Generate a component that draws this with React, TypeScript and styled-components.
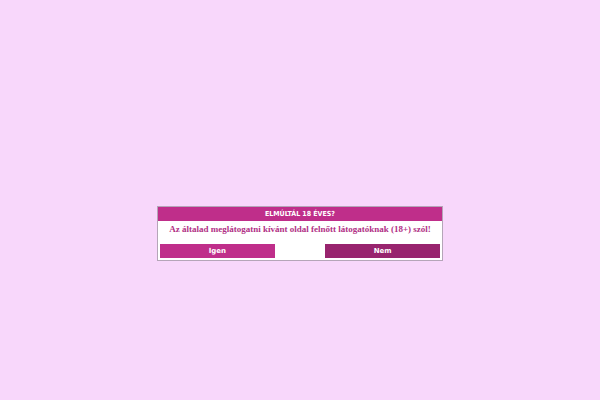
import styled, { createGlobalStyle } from 'styled-components';

const GlobalStyle = createGlobalStyle`
  * {
    box-sizing: border-box;
  }

  body {
    margin: 0;
    background-color: #f8d7fb;
  }
`;

const Page = styled.main`
  display: flex;
  justify-content: center;
  align-items: flex-start;
  min-height: 100vh;
  padding-top: 206px;
`;

const Dialog = styled.section`
  width: 100%;
  max-width: 286px;
  border: 1px solid #b5a5b8;
  background-color: #ffffff;
`;

const Title = styled.h1`
  margin: 0;
  background-color: #bf2e8a;
  color: #ffffff;
  font: bold 7px/14px 'DejaVu Sans Condensed', 'DejaVu Sans', sans-serif;
  text-align: center;
`;

const Content = styled.div`
  padding: 1px 2px 2px;
`;

const Message = styled.p`
  margin: 0 0 8px;
  color: #b12f85;
  font: bold 9px/14px 'Liberation Serif', serif;
  text-align: center;
`;

const Actions = styled.div`
  display: flex;
  justify-content: space-between;
`;

const Button = styled.button<{ $dark?: boolean }>`
  width: 41%;
  padding: 0;
  border: none;
  background-color: ${({ $dark }) => ($dark ? '#98246e' : '#bf2e8a')};
  color: #ffffff;
  font: bold 7px/14px 'DejaVu Sans', sans-serif;
  cursor: pointer;
`;

function App() {
  return (
    <>
      <GlobalStyle />
      <Page>
        <Dialog>
          <Title>ELMÚLTÁL 18 ÉVES?</Title>
          <Content>
            <Message>
              Az általad meglátogatni kívánt oldal felnőtt látogatóknak (18+)
              szól!
            </Message>
            <Actions>
              <Button type="button">Igen</Button>
              <Button type="button" $dark>
                Nem
              </Button>
            </Actions>
          </Content>
        </Dialog>
      </Page>
    </>
  );
}

export default App;
